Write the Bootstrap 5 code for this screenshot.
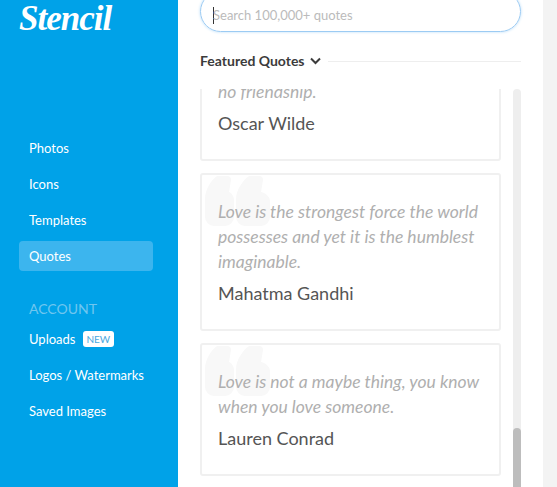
<!DOCTYPE html>
<html lang="en">
<head>
  <meta charset="UTF-8">
  <title>Stencil Quotes</title>
  <link href="https://cdn.jsdelivr.net/npm/bootstrap@5.3.0/dist/css/bootstrap.min.css" rel="stylesheet">
  <style>
    html, body { height: 487px; overflow: hidden; }
    body { font-family: Lato, "Liberation Sans", sans-serif; background: #f3f3f3; }
    .shell { height: 487px; width: 543px; background: #fff; }
    .side { width: 178px; background: #00a2e8; color: #fff; padding: 0 25px 0 19px; }
    .brand { font-family: "Liberation Serif", serif; font-style: italic; font-weight: 700; font-size: 35px; line-height: 38px; height: 133px; letter-spacing: -1px; }
    .side-link { display: block; color: #fff; text-decoration: none; font-size: 13px; line-height: 30px; height: 30px; padding: 0 10px; margin-bottom: 6px; border-radius: 4px; white-space: nowrap; }
    .side-link.on { background: #3cb5ee; }
    .side-head { font-size: 14px; color: #70c6ef; padding: 0 10px; line-height: 20px; margin-top: 28px; margin-bottom: 5px; }
    .tag-new { background: #fff; color: #4aa8e0; font-size: 10px; line-height: 16px; height: 16px; width: 31px; text-align: center; border-radius: 3px; display: inline-block; margin-left: 4px; vertical-align: 1px; }
    .pane { padding: 0 22px; min-width: 0; }
    .search-box { height: 41px; margin-top: -9px; border: 1px solid #9ccbf3; border-radius: 21px; box-shadow: 0 0 3px #b8dcf8; padding: 13px 12px 0; font-size: 13px; line-height: 20px; color: #bbb; }
    .search-box::before { content: ""; display: inline-block; width: 1px; height: 17px; background: #333; vertical-align: -4px; margin-right: -1px; }
    .feat { margin-top: 19px; height: 20px; margin-bottom: 18px; font-size: 14px; font-weight: 700; color: #3c3c3c; line-height: 20px; gap: 5px; }
    .feat-line { height: 1px; background: #eee; margin-left: 2px; }
    .scroll-wrap { height: 398px; overflow: hidden; }
    .scroll-list { width: 301px; }
    .quote-card { position: relative; border: 2px solid #f0f0f0; border-radius: 3px; padding: 24px 16px 23px; margin-bottom: 12px; }
    .quote-card svg { position: absolute; left: 3px; top: 0; }
    .quote-card.cut { margin-top: -86px; }
    .quote-text { position: relative; font-style: italic; font-size: 17.5px; line-height: 25px; color: #afafaf; margin-bottom: 6px; }
    .quote-by { position: relative; font-size: 18px; line-height: 26px; color: #555; }
    .track { width: 8px; background: #eee; border-radius: 4px 4px 0 0; }
    .thumb { width: 8px; height: 59px; background: #bdbdbd; border-radius: 4px 4px 0 0; margin-top: auto; }
  </style>
</head>
<body>
  <div class="shell d-flex">
    <aside class="side flex-shrink-0">
      <div class="brand">Stencil</div>
      <a class="side-link" href="#">Photos</a>
      <a class="side-link" href="#">Icons</a>
      <a class="side-link" href="#">Templates</a>
      <a class="side-link on" href="#">Quotes</a>
      <div class="side-head">ACCOUNT</div>
      <a class="side-link" href="#">Uploads <span class="tag-new">NEW</span></a>
      <a class="side-link" href="#">Logos / Watermarks</a>
      <a class="side-link" href="#">Saved Images</a>
    </aside>
    <main class="pane flex-grow-1">
      <div class="search-box">Search 100,000+ quotes</div>
      <div class="feat d-flex align-items-center">
        <span>Featured Quotes</span>
        <svg width="11" height="8" viewBox="0 0 11 8"><path d="M1 1.5l4.5 4.5L10 1.5" fill="none" stroke="#3c3c3c" stroke-width="2"/></svg>
        <div class="feat-line flex-grow-1"></div>
      </div>
      <div class="scroll-wrap d-flex justify-content-between">
        <div class="scroll-list">
          <div class="quote-card cut">
            <div class="quote-text">There is passion, enmity, worship, love, but<br>no friendship.</div>
            <div class="quote-by">Oscar Wilde</div>
          </div>
          <div class="quote-card">
            <svg width="66" height="52" viewBox="0 0 66 52"><path fill="#f8f8f8" d="M12 1h10a4 4 0 0 1 4 4l-2 12c3 1 5 5 5 8v17a9 9 0 0 1-9 9H9a9 9 0 0 1-9-9V24C0 15 6 5 12 1zM44 1h10a4 4 0 0 1 4 4l-2 12c5 1 9 5 9 9v16a9 9 0 0 1-9 9H40a9 9 0 0 1-9-9V24c0-9 7-19 13-23z"/></svg>
            <div class="quote-text">Love is the strongest force the world possesses and yet it is the humblest imaginable.</div>
            <div class="quote-by">Mahatma Gandhi</div>
          </div>
          <div class="quote-card">
            <svg width="66" height="52" viewBox="0 0 66 52"><path fill="#f8f8f8" d="M12 1h10a4 4 0 0 1 4 4l-2 12c3 1 5 5 5 8v17a9 9 0 0 1-9 9H9a9 9 0 0 1-9-9V24C0 15 6 5 12 1zM44 1h10a4 4 0 0 1 4 4l-2 12c5 1 9 5 9 9v16a9 9 0 0 1-9 9H40a9 9 0 0 1-9-9V24c0-9 7-19 13-23z"/></svg>
            <div class="quote-text">Love is not a maybe thing, you know when you love someone.</div>
            <div class="quote-by">Lauren Conrad</div>
          </div>
        </div>
        <div class="track d-flex flex-column"><div class="thumb"></div></div>
      </div>
    </main>
  </div>
  <script src="https://cdn.jsdelivr.net/npm/bootstrap@5.3.0/dist/js/bootstrap.bundle.min.js"></script>
</body>
</html>
